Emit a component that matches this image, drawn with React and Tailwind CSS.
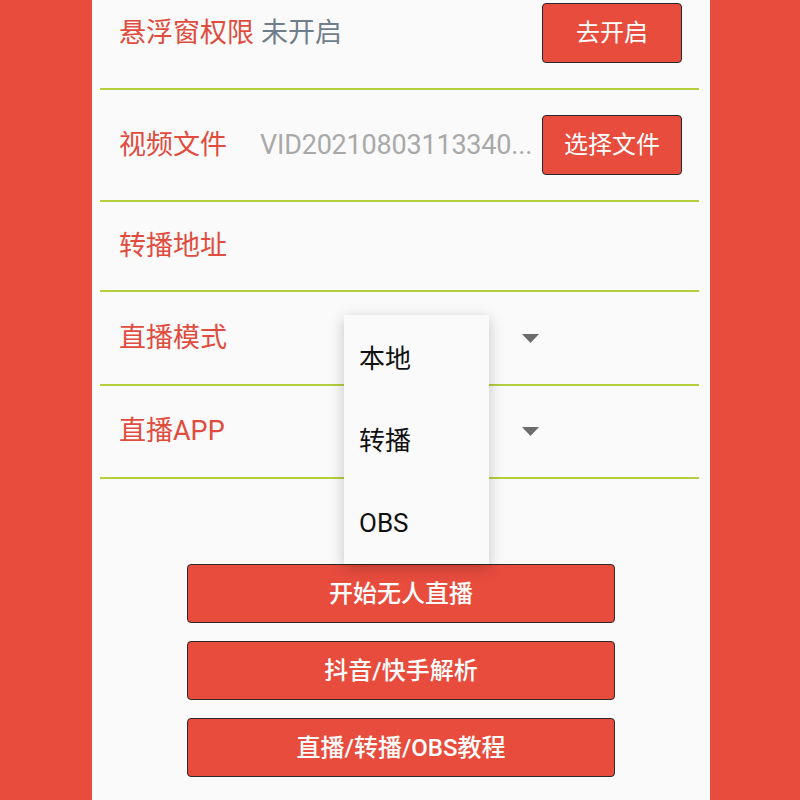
import React from "react";

const font = { fontFamily: "Roboto, 'Noto Sans CJK SC', sans-serif" };

function Arrow() {
  return (
    <svg width="17" height="9" viewBox="0 0 17 9">
      <polygon points="0,0 17,0 8.5,9" fill="#6b6b6b" />
    </svg>
  );
}

export default function App() {
  return (
    <div className="w-[800px] h-[800px] overflow-hidden flex relative" style={font}>
      <div className="w-[92px] h-full bg-[#e84c3d]" />
      <div className="w-[618px] h-full bg-[#fafafa] flex flex-col">
        <div className="ml-[8px] mr-[11px] flex flex-col">
          {/* Row 1 */}
          <div className="h-[90px] pb-[21px] border-b-2 border-[#b3cf3e] flex items-center pl-[19px] pr-[17px]">
            <div className="flex-1 text-[27px] leading-none">
              <span className="text-[#e04c3e]">悬浮窗权限</span>
              <span className="text-[#6f7e8a] ml-[7px]">未开启</span>
            </div>
            <button className="w-[140px] h-[60px] mb-[1px] bg-[#e84c3d] border border-[#2a2a2a] rounded-[4px] text-white text-[24px]">
              去开启
            </button>
          </div>
          {/* Row 2 */}
          <div className="h-[112px] border-b-2 border-[#b3cf3e] flex items-center pl-[19px] pr-[17px]">
            <div className="w-[141px] shrink-0 text-[27px] leading-none text-[#e04c3e]">视频文件</div>
            <div className="flex-1 min-w-0 text-[27px] leading-none text-[#a9a9a9] whitespace-nowrap tracking-[-0.2px]">
              VID20210803113340...
            </div>
            <button className="ml-[2px] shrink-0 w-[140px] h-[60px] bg-[#e84c3d] border border-[#2a2a2a] rounded-[4px] text-white text-[24px]">
              选择文件
            </button>
          </div>
          {/* Row 3 */}
          <div className="h-[90px] border-b-2 border-[#b3cf3e] flex items-center pl-[19px]">
            <div className="text-[27px] leading-none text-[#e04c3e]">转播地址</div>
          </div>
          {/* Row 4 */}
          <div className="h-[94px] border-b-2 border-[#b3cf3e] flex items-center pl-[19px]">
            <div className="w-[141px] shrink-0 text-[27px] leading-none text-[#e04c3e]">直播模式</div>
            <div className="w-[279px] flex justify-end">
              <Arrow />
            </div>
          </div>
          {/* Row 5 */}
          <div className="h-[93px] border-b-2 border-[#b3cf3e] flex items-center pl-[19px]">
            <div className="w-[141px] shrink-0 text-[27px] leading-none text-[#e04c3e]">直播APP</div>
            <div className="w-[279px] flex justify-end">
              <Arrow />
            </div>
          </div>
        </div>
        {/* Bottom buttons */}
        <div className="mt-[85px] flex flex-col gap-[18px] items-center">
          {["开始无人直播", "抖音/快手解析", "直播/转播/OBS教程"].map((t) => (
            <button
              key={t}
              className="w-[428px] h-[59px] bg-[#e84c3d] border border-[#2a2a2a] rounded-[4px] text-white text-[24px] font-medium"
            >
              {t}
            </button>
          ))}
        </div>
      </div>
      <div className="flex-1 h-full bg-[#e84c3d]" />

      {/* Dropdown popup */}
      <div className="absolute left-[344px] top-[315px] w-[145px] h-[249px] pt-[3px] bg-[#fafafa] shadow-[0_4px_14px_rgba(0,0,0,0.22)] flex flex-col">
        {["本地", "转播", "OBS"].map((t) => (
          <div key={t} className="h-[82px] flex items-center pl-[15px] text-[26px] leading-none text-[#111]">
            {t}
          </div>
        ))}
      </div>
    </div>
  );
}
